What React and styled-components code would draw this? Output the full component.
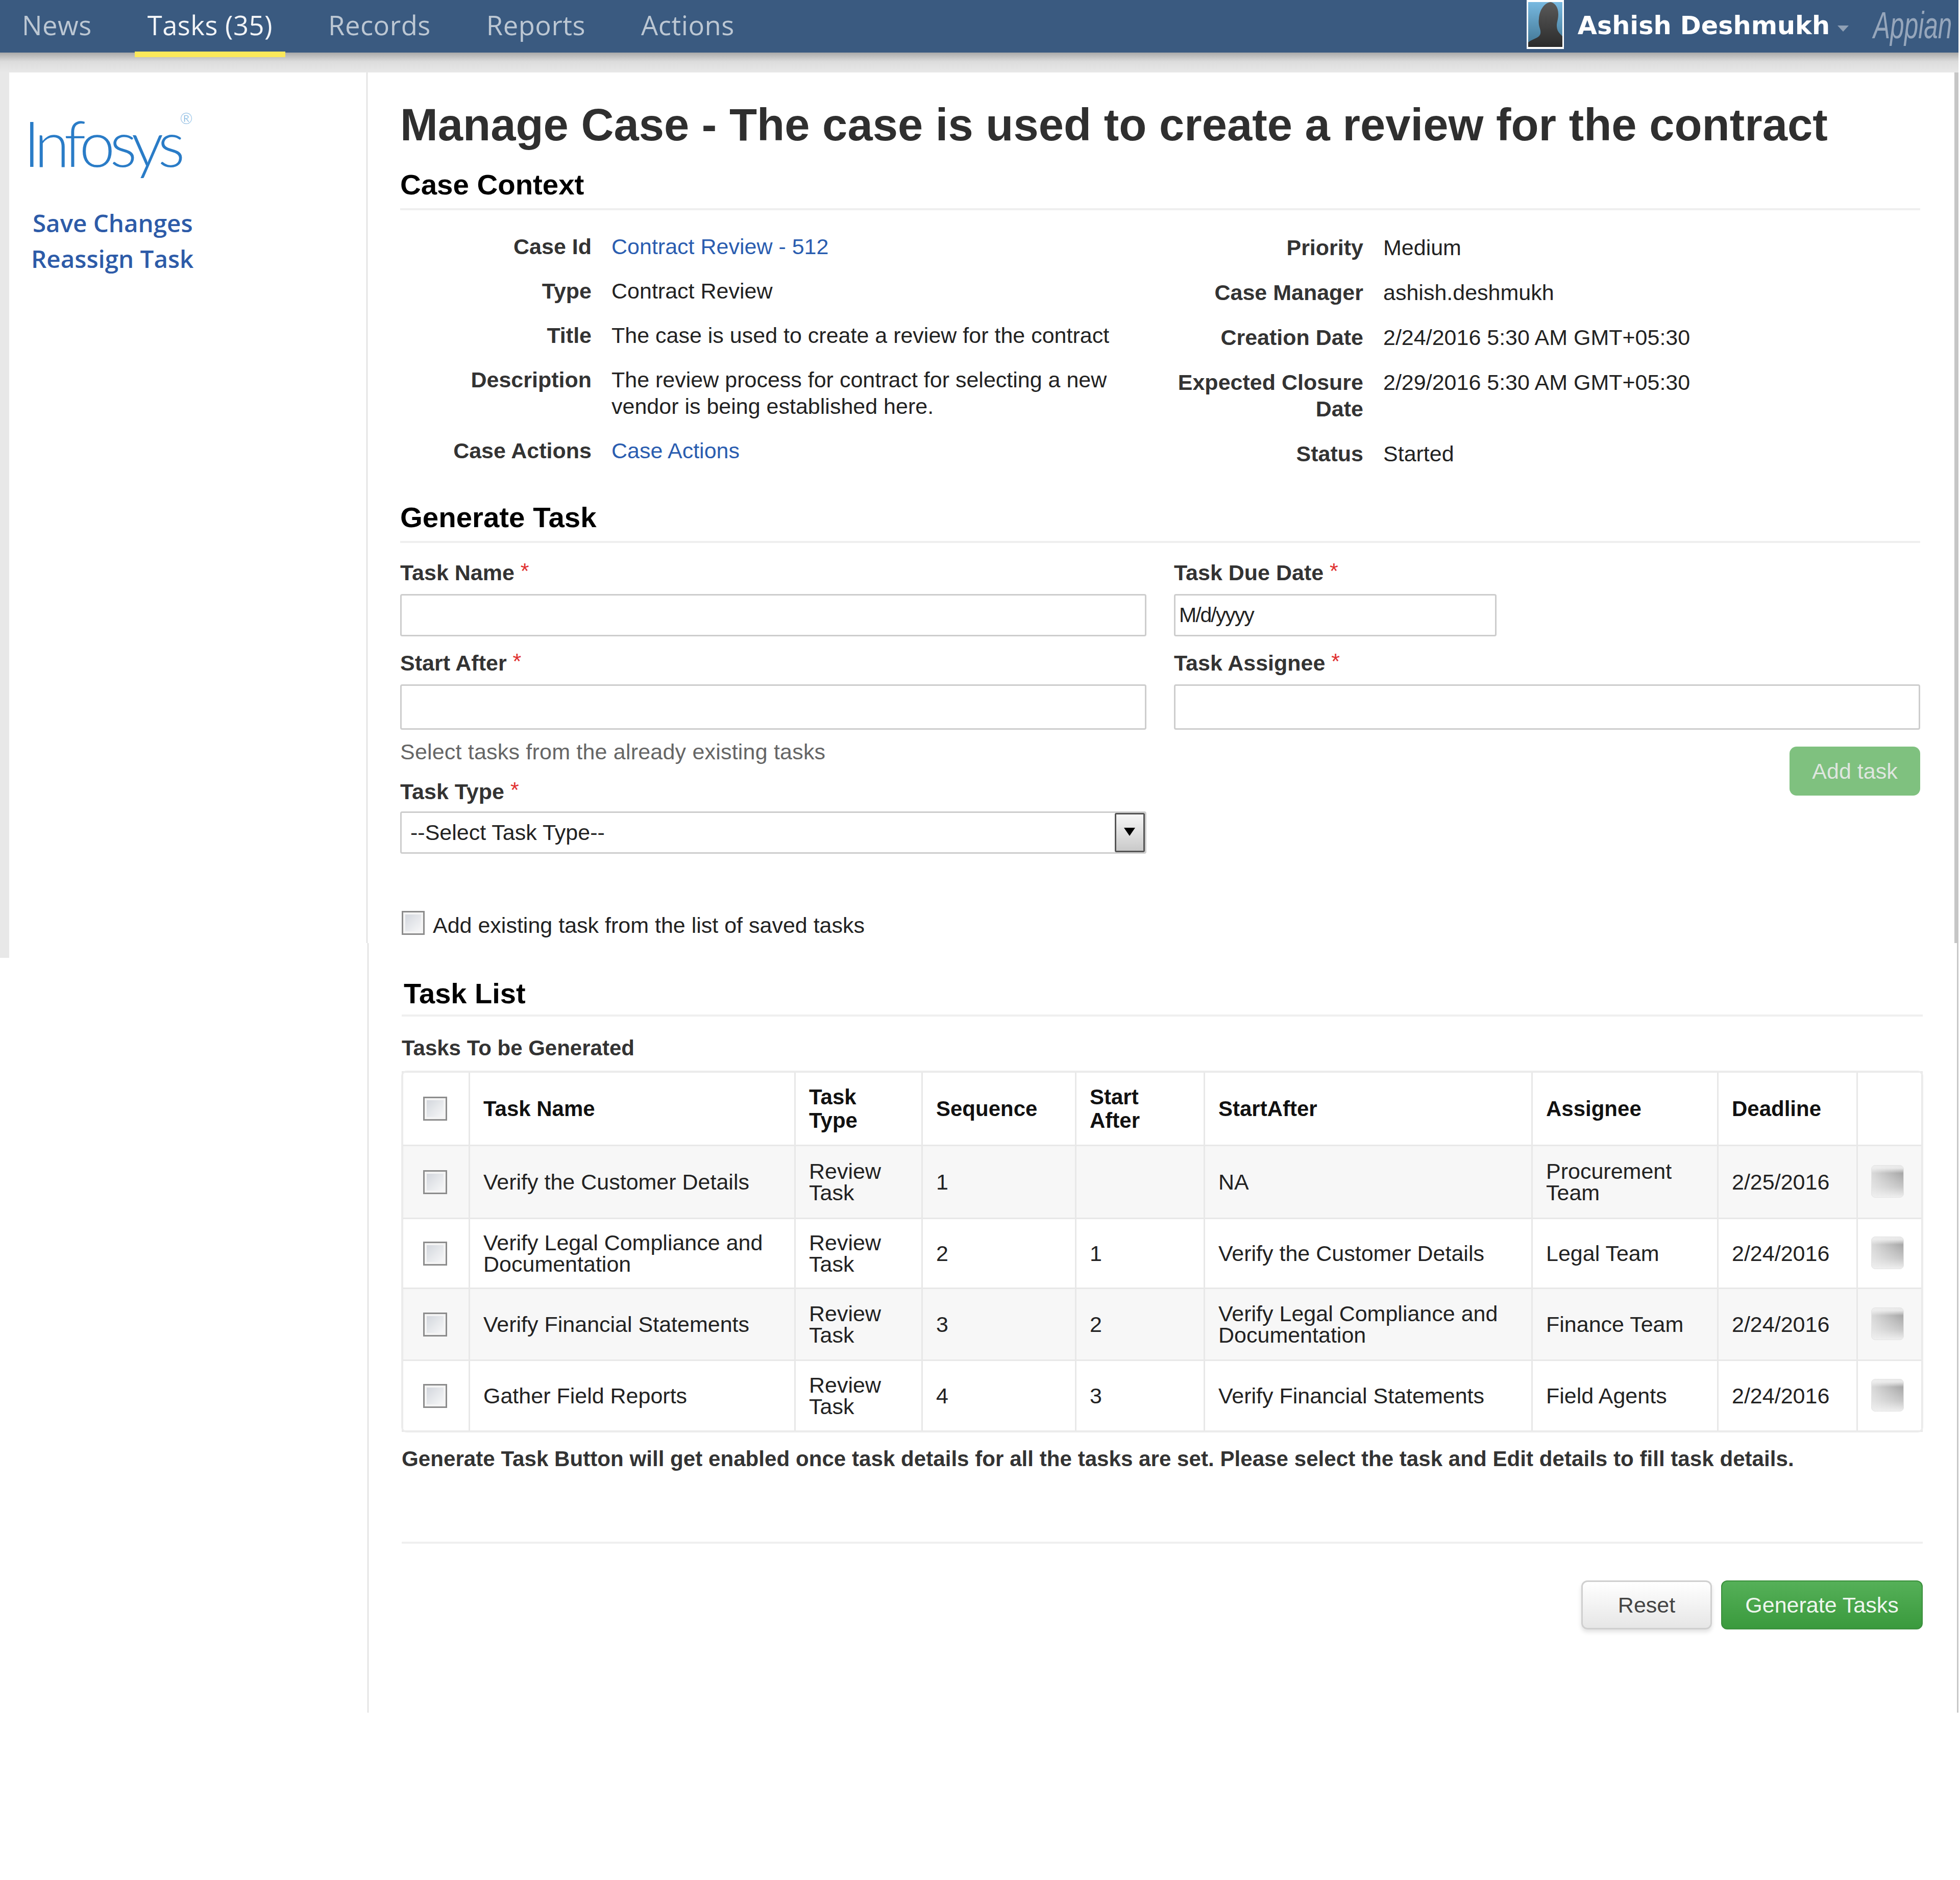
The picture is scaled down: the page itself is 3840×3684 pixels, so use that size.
import React from 'react'
import styled, { createGlobalStyle } from 'styled-components'

const tabs = ['News', 'Tasks (35)', 'Records', 'Reports', 'Actions']

const leftDetails = [
  { label: 'Case Id', value: 'Contract Review - 512', link: true },
  { label: 'Type', value: 'Contract Review' },
  { label: 'Title', value: 'The case is used to create a review for the contract' },
  { label: 'Description', value: 'The review process for contract for selecting a new vendor is being established here.' },
  { label: 'Case Actions', value: 'Case Actions', link: true },
]

const rightDetails = [
  { label: 'Priority', value: 'Medium' },
  { label: 'Case Manager', value: 'ashish.deshmukh' },
  { label: 'Creation Date', value: '2/24/2016 5:30 AM GMT+05:30' },
  { label: 'Expected Closure Date', value: '2/29/2016 5:30 AM GMT+05:30' },
  { label: 'Status', value: 'Started' },
]

const tasks = [
  { h: 143, name: 'Verify the Customer Details', seq: '1', after: '', startAfter: 'NA', assignee: <>Procurement<br />Team</>, deadline: '2/25/2016' },
  { h: 137, name: 'Verify Legal Compliance and Documentation', seq: '2', after: '1', startAfter: 'Verify the Customer Details', assignee: 'Legal Team', deadline: '2/24/2016' },
  { h: 141, name: 'Verify Financial Statements', seq: '3', after: '2', startAfter: 'Verify Legal Compliance and Documentation', assignee: 'Finance Team', deadline: '2/24/2016' },
  { h: 139, name: 'Gather Field Reports', seq: '4', after: '3', startAfter: 'Verify Financial Statements', assignee: 'Field Agents', deadline: '2/24/2016' },
]

const columns = [131, 638, 249, 301, 252, 642, 364, 273, 127]

function App() {
  return (
    <Page>
      <GlobalStyle />
      <NavBar>
        <Tabs>
          {tabs.map((tab) => (
            <Tab key={tab} $active={tab.startsWith('Tasks')}>{tab}</Tab>
          ))}
        </Tabs>
        <UserArea>
          <Avatar viewBox="0 0 73 96">
            <defs>
              <linearGradient id="sky" x1="0" y1="0" x2="0" y2="1">
                <stop offset="0" stopColor="#78b9e0" />
                <stop offset="1" stopColor="#3f7391" />
              </linearGradient>
              <linearGradient id="person" x1="0" y1="0" x2="0" y2="1">
                <stop offset="0" stopColor="#5a5a5a" />
                <stop offset="1" stopColor="#2b2b2b" />
              </linearGradient>
            </defs>
            <rect width="73" height="96" fill="#fff" />
            <rect x="3" y="4" width="67" height="88" fill="url(#sky)" />
            <path d="M47 4c9 2 15 11 15 24 0 9-3 16-3 22 0 8 3 13 8 18l3 3v21H3V83c6-5 14-7 20-11 5-4 5-9 3-16-2-6-3-12-2-19 1-17 10-31 23-33z" fill="url(#person)" />
          </Avatar>
          <UserName>Ashish Deshmukh</UserName>
          <Caret />
          <AppianMark>Appian</AppianMark>
        </UserArea>
      </NavBar>

      <Shell>
        <Sidebar>
          <LogoText>Infosys<LogoMark>®</LogoMark></LogoText>
          <SideLink>Save Changes</SideLink>
          <SideLink $shift>Reassign Task</SideLink>
        </Sidebar>

        <Main>
          <UpperPanel>
            <PageTitle>Manage Case - The case is used to create a review for the contract</PageTitle>
            <SectionTitle $gap={35}>Case Context</SectionTitle>

            <DetailColumns>
              <DetailList $gap={35}>
                {leftDetails.map((d) => (
                  <React.Fragment key={d.label}>
                    <DetailLabel>{d.label}</DetailLabel>
                    <DetailValue $link={d.link}>{d.value}</DetailValue>
                  </React.Fragment>
                ))}
              </DetailList>
              <DetailList $gap={36} $offset={2}>
                {rightDetails.map((d) => (
                  <React.Fragment key={d.label}>
                    <DetailLabel>{d.label}</DetailLabel>
                    <DetailValue>{d.value}</DetailValue>
                  </React.Fragment>
                ))}
              </DetailList>
            </DetailColumns>

            <SectionTitle $gap={67}>Generate Task</SectionTitle>

            <FormGrid>
              <FormColumn>
                <FieldLabel>Task Name <Required>*</Required></FieldLabel>
                <TextBox $h={83} />
                <FieldLabel $top={27}>Start After <Required>*</Required></FieldLabel>
                <TextBox $h={89} />
                <HelpText>Select tasks from the already existing tasks</HelpText>
                <FieldLabel $top={28}>Task Type <Required>*</Required></FieldLabel>
                <SelectBox>
                  <SelectText>--Select Task Type--</SelectText>
                  <SelectArrow />
                </SelectBox>
              </FormColumn>
              <FormColumn>
                <FieldLabel>Task Due Date <Required>*</Required></FieldLabel>
                <TextBox $h={83} $w={632}>M/d/yyyy</TextBox>
                <FieldLabel $top={27}>Task Assignee <Required>*</Required></FieldLabel>
                <TextBox $h={89} />
                <AddButton>Add task</AddButton>
              </FormColumn>
            </FormGrid>

            <CheckRow>
              <CheckBox />
              <CheckText>Add existing task from the list of saved tasks</CheckText>
            </CheckRow>
          </UpperPanel>

          <LowerPanel>
            <ListTitle>Task List</ListTitle>
            <SubTitle>Tasks To be Generated</SubTitle>

            <TaskTable>
              <colgroup>
                {columns.map((w, i) => <col key={i} width={w} />)}
              </colgroup>
              <thead>
                <TaskRow $h={144}>
                  <HeadCell><CellCheck /></HeadCell>
                  <HeadCell>Task Name</HeadCell>
                  <HeadCell>Task<br />Type</HeadCell>
                  <HeadCell>Sequence</HeadCell>
                  <HeadCell>Start<br />After</HeadCell>
                  <HeadCell>StartAfter</HeadCell>
                  <HeadCell>Assignee</HeadCell>
                  <HeadCell>Deadline</HeadCell>
                  <HeadCell />
                </TaskRow>
              </thead>
              <tbody>
                {tasks.map((t) => (
                  <TaskRow key={t.seq} $h={t.h} $striped={t.seq % 2 === 1}>
                    <BodyCell><CellCheck /></BodyCell>
                    <BodyCell>{t.name}</BodyCell>
                    <BodyCell>Review<br />Task</BodyCell>
                    <BodyCell>{t.seq}</BodyCell>
                    <BodyCell>{t.after}</BodyCell>
                    <BodyCell>{t.startAfter}</BodyCell>
                    <BodyCell>{t.assignee}</BodyCell>
                    <BodyCell>{t.deadline}</BodyCell>
                    <BodyCell><EditIcon /></BodyCell>
                  </TaskRow>
                ))}
              </tbody>
            </TaskTable>

            <NoteText>Generate Task Button will get enabled once task details for all the tasks are set. Please select the task and Edit details to fill task details.</NoteText>
            <Rule />
            <ButtonRow>
              <ResetButton>Reset</ResetButton>
              <GenerateButton>Generate Tasks</GenerateButton>
            </ButtonRow>
          </LowerPanel>
        </Main>
      </Shell>
    </Page>
  )
}

const GlobalStyle = createGlobalStyle`
  html, body {
    margin: 0;
    padding: 0;
    background: #fff;
  }
  * {
    box-sizing: border-box;
  }
`

const Page = styled.div`
  width: 3837px;
  min-height: 3684px;
  font-family: "Liberation Sans", Arial, sans-serif;
  font-size: 43px;
  color: #222;
`

const NavBar = styled.header`
  height: 103px;
  background: #3a5a80;
  display: flex;
  justify-content: space-between;
  padding-left: 18px;
  padding-right: 7px;
`

const Tabs = styled.nav`
  display: flex;
  gap: 59px;
`

const Tab = styled.div`
  position: relative;
  padding: 0 25px;
  line-height: 98px;
  font-family: "Open Sans", sans-serif;
  font-size: 52.5px;
  letter-spacing: 0.5px;
  color: ${(p) => (p.$active ? '#f2f4f7' : '#bcc7d3')};

  ${(p) => p.$active && `
    &::after {
      content: '';
      position: absolute;
      left: 0;
      right: 0;
      bottom: -9px;
      height: 11px;
      background: #fbe85a;
    }
  `}
`

const UserArea = styled.div`
  display: flex;
  align-items: flex-start;
`

const Avatar = styled.svg`
  width: 73px;
  height: 96px;
`

const UserName = styled.div`
  margin-left: 27px;
  line-height: 100px;
  font-family: "DejaVu Sans", sans-serif;
  font-weight: 700;
  font-size: 49.3px;
  color: #fff;
`

const Caret = styled.div`
  margin: 50px 0 0 15px;
  width: 0;
  height: 0;
  border-left: 11px solid transparent;
  border-right: 11px solid transparent;
  border-top: 12px solid #8fa0b5;
`

const AppianMark = styled.div`
  width: 160px;
  margin-left: 48px;
  line-height: 100px;
  font-size: 74px;
  font-style: italic;
  color: #96a6bb;
  transform: scaleX(0.67);
  transform-origin: left center;
`

const Shell = styled.div`
  display: flex;
  padding: 39px 0 0 18px;
  background:
    linear-gradient(#a9a9a9, #dcdcdc 45%, #e8e8e8) left top / 100% 39px no-repeat,
    linear-gradient(#e8e8e8, #e8e8e8) left top / 18px 1774px no-repeat,
    linear-gradient(#c6c6c6, #c6c6c6) right top / 8px 1774px no-repeat;
`

const Sidebar = styled.aside`
  width: 700px;
  flex: none;
  background: #fff;
  border-top-left-radius: 12px;
`

const LogoText = styled.div`
  position: relative;
  width: fit-content;
  margin: 62px 0 48px 28px;
  line-height: 150px;
  font-family: "Lato", sans-serif;
  font-weight: 300;
  font-size: 125px;
  letter-spacing: -10px;
  color: #2a7cc7;
  white-space: nowrap;
`

const LogoMark = styled.span`
  position: absolute;
  left: 100%;
  top: 12px;
  line-height: 30px;
  font-size: 30px;
  letter-spacing: 0;
  color: #7db3e0;
`

const SideLink = styled.div`
  margin-left: ${(p) => (p.$shift ? '43px' : '46px')};
  line-height: 70px;
  font-family: "Open Sans", sans-serif;
  font-weight: 600;
  font-size: 47.5px;
  color: #2d5ba8;
`

const Main = styled.main`
  flex: 1;
  min-width: 0;
  display: flex;
  flex-direction: column;
`

const UpperPanel = styled.section`
  height: 1706px;
  margin-right: 8px;
  padding: 53px 67px 0 64px;
  background: #fff;
  border-left: 2px solid #dcdcdc;
  border-top-right-radius: 12px;
`

const LowerPanel = styled.section`
  margin-left: 2px;
  padding: 68px 67px 163px 65px;
  background: #fff;
  border-left: 2px solid #dcdcdc;
  border-right: 3px solid #c8c8c8;
`

const PageTitle = styled.h1`
  margin: 0;
  line-height: 100px;
  font-size: 88.6px;
  font-weight: 700;
  color: #2f2f2f;
  white-space: nowrap;
`

const SectionTitle = styled.h2`
  margin: ${(p) => p.$gap}px 0 0;
  padding-bottom: 14px;
  line-height: 64px;
  font-size: 56.4px;
  font-weight: 700;
  color: #000;
  border-bottom: 4px solid #efefef;
`

const DetailColumns = styled.div`
  display: grid;
  grid-template-columns: 1517px 1fr;
  margin-top: 45px;
`

const DetailList = styled.dl`
  display: grid;
  grid-template-columns: ${(p) => (p.$offset ? '370px' : '375px')} 1fr;
  column-gap: 39px;
  row-gap: ${(p) => p.$gap}px;
  align-content: start;
  margin: ${(p) => p.$offset || 0}px 0 0;
  width: ${(p) => (p.$offset ? '1200px' : '1470px')};
  line-height: 52px;
`

const DetailLabel = styled.dt`
  text-align: right;
  font-weight: 700;
  color: #333;
`

const DetailValue = styled.dd`
  margin: 0;
  color: ${(p) => (p.$link ? '#2a5db0' : '#222')};
`

const FormGrid = styled.div`
  display: grid;
  grid-template-columns: 1462px 1462px;
  column-gap: 54px;
  margin-top: 33px;
`

const FormColumn = styled.div`
  display: flex;
  flex-direction: column;
  align-items: flex-start;
`

const FieldLabel = styled.label`
  display: block;
  margin-top: ${(p) => p.$top || 0}px;
  line-height: 50px;
  font-weight: 700;
  color: #333;
`

const Required = styled.span`
  position: relative;
  top: -4px;
  color: #e03030;
  font-weight: 400;
`

const TextBox = styled.div`
  width: ${(p) => (p.$w ? `${p.$w}px` : '100%')};
  height: ${(p) => p.$h}px;
  margin-top: 17px;
  padding-left: 7px;
  line-height: ${(p) => p.$h - 6}px;
  font-size: 41px;
  letter-spacing: -2px;
  background: #fff;
  border: 3px solid #cdcdcd;
  border-radius: 4px;
  color: #222;
`

const HelpText = styled.div`
  margin-top: 18px;
  line-height: 50px;
  letter-spacing: 0.2px;
  color: #666;
`

const SelectBox = styled.div`
  width: 100%;
  height: 83px;
  margin-top: 14px;
  display: flex;
  justify-content: space-between;
  align-items: stretch;
  background: #fff;
  border: 3px solid #cdcdcd;
  border-radius: 4px;
`

const SelectText = styled.span`
  padding-left: 17px;
  line-height: 77px;
`

const SelectArrow = styled.span`
  position: relative;
  width: 59px;
  background: linear-gradient(#f7f7f7, #c9c9c9);
  border: 3px solid #555;
  border-radius: 3px;

  &::after {
    content: '';
    position: absolute;
    left: 15px;
    top: 26px;
    border-left: 11px solid transparent;
    border-right: 11px solid transparent;
    border-top: 16px solid #000;
  }
`

const AddButton = styled.div`
  align-self: flex-end;
  width: 256px;
  height: 96px;
  margin-top: 33px;
  text-align: center;
  line-height: 96px;
  background: #7fc17f;
  border-radius: 14px;
  color: #dfe6df;
`

const CheckBox = styled.span`
  flex: none;
  width: 45px;
  height: 47px;
  background: linear-gradient(135deg, #cfd3da, #fbfbfb);
  border: 3px solid #8c8c8c;
  box-shadow: inset 0 0 0 4px #f4f4f4;
`

const CheckRow = styled.div`
  display: flex;
  align-items: flex-start;
  gap: 16px;
  margin: 112px 0 0 3px;
`

const CheckText = styled.span`
  margin-top: 3px;
  line-height: 50px;
`

const ListTitle = styled.h2`
  margin: 0;
  padding: 0 0 10px 4px;
  line-height: 62px;
  font-size: 56px;
  font-weight: 700;
  color: #000;
  border-bottom: 4px solid #efefef;
`

const SubTitle = styled.div`
  margin-top: 37px;
  line-height: 50px;
  font-size: 42px;
  font-weight: 700;
  color: #333;
`

const TaskTable = styled.table`
  margin: 20px 0 0;
  width: 2977px;
  table-layout: fixed;
  border-collapse: collapse;
  outline: 3px solid #ececec;
  outline-offset: -2px;
  border-radius: 10px;
`

const TaskRow = styled.tr`
  height: ${(p) => p.$h}px;
  background: ${(p) => (p.$striped ? '#f7f7f7' : '#fff')};
`

const HeadCell = styled.th`
  padding: 0 0 0 26px;
  text-align: left;
  line-height: 46px;
  font-size: 42px;
  font-weight: 700;
  color: #111;
  border: 3px solid #e8e8e8;
`

const BodyCell = styled.td`
  padding: 0 24px 0 26px;
  line-height: 42px;
  font-size: 43px;
  color: #222;
  border: 3px solid #e8e8e8;
`

const CellCheck = styled(CheckBox)`
  display: block;
  width: 47px;
  margin-left: 13px;
`

const EditIcon = styled.span`
  display: block;
  width: 64px;
  height: 64px;
  margin-top: -3px;
  border: 1px solid #e4e4e4;
  border-radius: 8px;
  background:
    linear-gradient(90deg, rgba(240, 240, 240, 0.7), rgba(240, 240, 240, 0)),
    linear-gradient(#e8e8e8 8%, #a6a6a6 24%, #c6c6c6 68%, #eeeeee);
`

const NoteText = styled.p`
  margin: 28px 0 0;
  line-height: 50px;
  font-size: 42.15px;
  font-weight: 700;
  color: #333;
  white-space: nowrap;
`

const Rule = styled.hr`
  margin: 137px 0 0;
  height: 4px;
  border: 0;
  background: #efefef;
`

const ButtonRow = styled.div`
  display: flex;
  justify-content: flex-end;
  gap: 18px;
  margin-top: 72px;
`

const ResetButton = styled.div`
  width: 256px;
  height: 96px;
  text-align: center;
  line-height: 90px;
  background: linear-gradient(#fff, #e6e6e6);
  border: 3px solid #cfcfcf;
  border-radius: 12px;
  box-shadow: 0 5px 8px rgba(0, 0, 0, 0.12);
  color: #444;
`

const GenerateButton = styled.div`
  width: 395px;
  height: 96px;
  text-align: center;
  line-height: 92px;
  background: linear-gradient(#55b058, #3a9a3d);
  border: 2px solid #3a8f3c;
  border-radius: 12px;
  color: #eef6ee;
`

export default App
